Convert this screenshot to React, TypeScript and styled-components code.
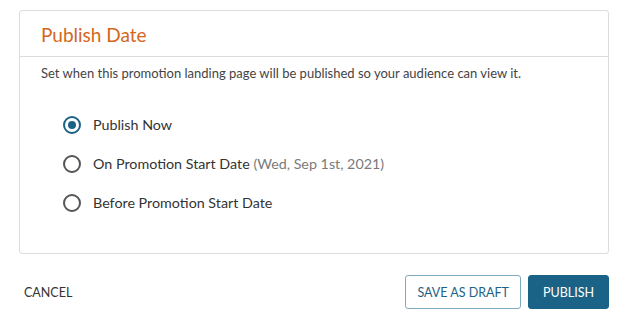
import React, { useState } from 'react';
import styled, { createGlobalStyle } from 'styled-components';

const Colors = {
  orange: '#d4671c',
  border: '#dcdcdc',
  text: '#333333',
  muted: '#7a7a7a',
  primary: '#1b6386',
  primaryBorder: '#7fa9bf',
};

const Global = createGlobalStyle`
  body {
    margin: 0;
    background: #ffffff;
    font-family: Lato, "Open Sans", sans-serif;
    color: ${Colors.text};
  }
`;

type Option = { id: string; label: string; note?: string };

const options: Option[] = [
  { id: 'now', label: 'Publish Now' },
  { id: 'start', label: 'On Promotion Start Date', note: '(Wed, Sep 1st, 2021)' },
  { id: 'before', label: 'Before Promotion Start Date' },
];

const Page = styled.div`
  width: 590px;
  padding: 10px 0 0 19px;
`;

const Card = styled.div`
  height: 244px;
  box-sizing: border-box;
  border: 1px solid ${Colors.border};
  border-radius: 3px;
`;

const Header = styled.div`
  height: 46px;
  box-sizing: border-box;
  border-bottom: 1px solid ${Colors.border};
  display: flex;
  align-items: center;
  padding: 0 21px;
`;

const Title = styled.div`
  font-size: 19px;
  color: ${Colors.orange};
  margin-top: 1px;
`;

const Body = styled.div`
  padding: 8px 21px 0;
`;

const Description = styled.div`
  font-size: 13px;
  color: #444444;
  line-height: 17px;
`;

const OptionList = styled.div`
  display: flex;
  flex-direction: column;
  gap: 21px;
  padding: 34px 0 0 22px;
`;

const OptionRow = styled.label`
  display: flex;
  align-items: center;
  gap: 12px;
  font-size: 14.3px;
  line-height: 18px;
  color: ${Colors.text};
  cursor: pointer;
`;

const Radio = styled.span<{ $checked?: boolean }>`
  width: 18px;
  height: 18px;
  box-sizing: border-box;
  border-radius: 50%;
  border: 2px solid ${(p) => (p.$checked ? Colors.primary : '#555555')};
  display: flex;
  align-items: center;
  justify-content: center;

  &::after {
    content: '';
    width: 8px;
    height: 8px;
    border-radius: 50%;
    background: ${Colors.primary};
    display: ${(p) => (p.$checked ? 'block' : 'none')};
  }
`;

const Note = styled.span`
  color: ${Colors.muted};
`;

const Footer = styled.div`
  display: flex;
  justify-content: space-between;
  align-items: center;
  margin-top: 21px;
`;

const TextButton = styled.button`
  background: none;
  border: none;
  padding: 0 0 0 5px;
  font-family: inherit;
  font-size: 12.5px;
  color: ${Colors.text};
`;

const Actions = styled.div`
  display: flex;
  gap: 7px;
`;

const Button = styled.button<{ $primary?: boolean }>`
  height: 34px;
  padding: 0 ${(p) => (p.$primary ? '14px' : '11px')};
  border-radius: 3px;
  font-family: inherit;
  font-size: 12.5px;
  border: 1px solid ${(p) => (p.$primary ? Colors.primary : Colors.primaryBorder)};
  background: ${(p) => (p.$primary ? Colors.primary : '#ffffff')};
  color: ${(p) => (p.$primary ? '#ffffff' : Colors.primary)};
`;

export default function App() {
  const [selected, setSelected] = useState('now');

  return (
    <>
      <Global />
      <Page>
        <Card>
          <Header>
            <Title>Publish Date</Title>
          </Header>
          <Body>
            <Description>
              Set when this promotion landing page will be published so your audience can view it.
            </Description>
            <OptionList>
              {options.map((o) => (
                <OptionRow key={o.id} onClick={() => setSelected(o.id)}>
                  <Radio $checked={selected === o.id} />
                  <span>
                    {o.label}
                    {o.note && <Note> {o.note}</Note>}
                  </span>
                </OptionRow>
              ))}
            </OptionList>
          </Body>
        </Card>
        <Footer>
          <TextButton>CANCEL</TextButton>
          <Actions>
            <Button>SAVE AS DRAFT</Button>
            <Button $primary>PUBLISH</Button>
          </Actions>
        </Footer>
      </Page>
    </>
  );
}
